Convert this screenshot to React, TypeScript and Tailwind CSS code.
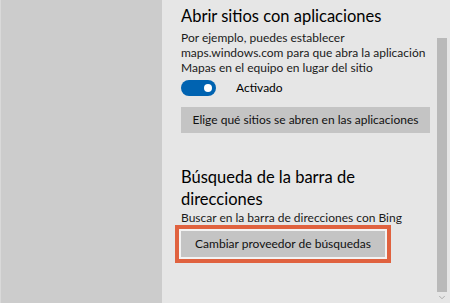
import { ChevronDown } from "lucide-react";

const font = { fontFamily: 'Lato, "Open Sans", sans-serif' };

export default function App() {
  return (
    <div className="flex h-[303px] w-[450px] overflow-hidden bg-[#e6e6e6] text-black" style={font}>
      <aside className="w-[162px] shrink-0 border-l border-[#d9d9d9] bg-[#cccccc]" />
      <main className="flex flex-1">
        <div className="flex-1 whitespace-nowrap pl-[19px] pt-[3px]">
          <h2 className="text-[16.5px] leading-[26px]">Abrir sitios con aplicaciones</h2>
          <p className="mt-[1px] text-[12px] leading-[15px] text-[#1a1a1a]">
            Por ejemplo, puedes establecer
            <br />
            maps.windows.com para que abra la aplicación
            <br />
            Mapas en el equipo en lugar del sitio
          </p>
          <div className="mt-[5px] flex items-center gap-[20px]">
            <span className="flex h-[16px] w-[35px] items-center justify-end rounded-full bg-[#0063b1] pr-[4px]">
              <span className="h-[8px] w-[8px] rounded-full bg-white" />
            </span>
            <span className="text-[12px] leading-[16px]">Activado</span>
          </div>
          <button className="mt-[11px] h-[26px] w-[249px] bg-[#c4c4c4] text-[12px] text-[#111]">
            Elige qué sitios se abren en las aplicaciones
          </button>
          <h2 className="mt-[33px] w-[185px] whitespace-normal text-[16.5px] leading-[22px]">
            Búsqueda de la barra de direcciones
          </h2>
          <p className="text-[12px] leading-[15px] text-[#1a1a1a]">Buscar en la barra de direcciones con Bing</p>
          <div className="ml-[-6px] inline-block border-[4px] border-[#e0623f] bg-[#f3f3f3] p-[2px]">
            <button className="block h-[26px] w-[204px] bg-[#c4c4c4] text-[12px] text-[#111]">
              Cambiar proveedor de búsquedas
            </button>
          </div>
        </div>
        <div className="mr-[3px] flex w-[10px] flex-col pt-[38px]">
          <div className="flex-1 bg-[#b9b9b9]" />
          <ChevronDown className="h-[11px] w-[10px] text-[#8a8a8a]" strokeWidth={1.5} />
        </div>
      </main>
    </div>
  );
}
